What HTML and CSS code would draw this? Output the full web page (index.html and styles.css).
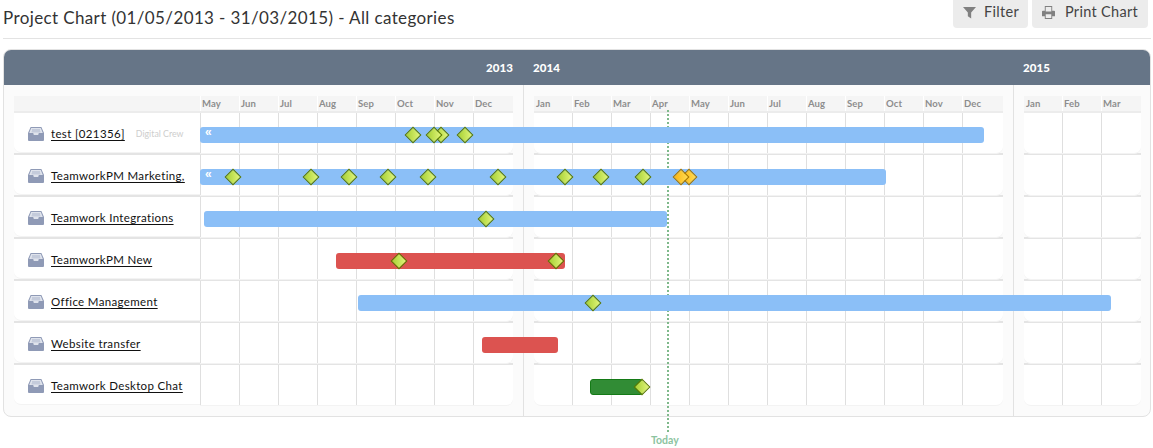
FILE: index.html
```html
<!DOCTYPE html>
<html lang="en">
<head>
<meta charset="utf-8">
<title>Project Chart</title>
<link rel="stylesheet" href="styles.css">
</head>
<body>
<header class="topbar">
  <h1 class="title">Project Chart (01/05/2013 - 31/03/2015) - All categories</h1>
  <div class="actions">
    <button class="btn btn-filter"><svg class="btn-icon" viewBox="0 0 14 14"><path d="M0 1h14L8.8 7v6.5L5.2 11V7z"/></svg>Filter</button>
    <button class="btn btn-print"><svg class="btn-icon" viewBox="0 0 14 14"><path fill-rule="evenodd" d="M3 0h8v5h2a1 1 0 0 1 1 1v5h-3v3H3v-3H0V6a1 1 0 0 1 1-1h2zM4 1v5h6V1zM4 9v4h6V9z"/></svg>Print Chart</button>
  </div>
</header>

<main class="panel">
  <div class="years">
    <div class="year-cell year-a">2013</div>
    <div class="year-cell year-b">2014</div>
    <div class="year-cell year-c">2015</div>
  </div>
  <div class="chart">
    <section class="sheet sheet-a">
      <div class="names">
        <div class="names-head"></div>
        <div class="name-row"><div class="name-cell"><svg class="tray" viewBox="0 0 16 14"><use href="#tray"/></svg><a class="name">test [021356]</a><span class="company">Digital Crew</span></div></div>
        <div class="name-row"><div class="name-cell"><svg class="tray" viewBox="0 0 16 14"><use href="#tray"/></svg><a class="name">TeamworkPM Marketing,</a></div></div>
        <div class="name-row"><div class="name-cell"><svg class="tray" viewBox="0 0 16 14"><use href="#tray"/></svg><a class="name">Teamwork Integrations</a></div></div>
        <div class="name-row"><div class="name-cell"><svg class="tray" viewBox="0 0 16 14"><use href="#tray"/></svg><a class="name">TeamworkPM New</a></div></div>
        <div class="name-row"><div class="name-cell"><svg class="tray" viewBox="0 0 16 14"><use href="#tray"/></svg><a class="name">Office Management</a></div></div>
        <div class="name-row"><div class="name-cell"><svg class="tray" viewBox="0 0 16 14"><use href="#tray"/></svg><a class="name">Website transfer</a></div></div>
        <div class="name-row"><div class="name-cell"><svg class="tray" viewBox="0 0 16 14"><use href="#tray"/></svg><a class="name">Teamwork Desktop Chat</a></div></div>
      </div>
      <div class="months m8">
        <div class="month-head"><span>May</span><span>Jun</span><span>Jul</span><span>Aug</span><span>Sep</span><span>Oct</span><span>Nov</span><span>Dec</span></div>
        <div class="grid-row"></div><div class="grid-row"></div><div class="grid-row"></div><div class="grid-row"></div><div class="grid-row"></div><div class="grid-row"></div><div class="grid-row"></div>
      </div>
    </section>
    <section class="sheet sheet-b">
      <div class="months m12">
        <div class="month-head"><span>Jan</span><span>Feb</span><span>Mar</span><span>Apr</span><span>May</span><span>Jun</span><span>Jul</span><span>Aug</span><span>Sep</span><span>Oct</span><span>Nov</span><span>Dec</span></div>
        <div class="grid-row"></div><div class="grid-row"></div><div class="grid-row"></div><div class="grid-row"></div><div class="grid-row"></div><div class="grid-row"></div><div class="grid-row"></div>
      </div>
    </section>
    <section class="sheet sheet-c">
      <div class="months m3">
        <div class="month-head"><span>Jan</span><span>Feb</span><span>Mar</span></div>
        <div class="grid-row"></div><div class="grid-row"></div><div class="grid-row"></div><div class="grid-row"></div><div class="grid-row"></div><div class="grid-row"></div><div class="grid-row"></div>
      </div>
    </section>
  </div>
</main>

<div class="today"><span class="today-label">Today</span></div>

<div class="bars">
  <div class="lane">
    <div class="bar blue" style="left:200px;width:784px"><span class="more">«</span></div>
    <i class="ms" style="left:413px"></i><i class="ms" style="left:441px"></i><i class="ms" style="left:434px"></i><i class="ms" style="left:465px"></i>
  </div>
  <div class="lane">
    <div class="bar blue" style="left:200px;width:686px"><span class="more">«</span></div>
    <i class="ms" style="left:233px"></i><i class="ms" style="left:311px"></i><i class="ms" style="left:349px"></i><i class="ms" style="left:388px"></i><i class="ms" style="left:428px"></i><i class="ms" style="left:498px"></i><i class="ms" style="left:565px"></i><i class="ms" style="left:601px"></i><i class="ms" style="left:643px"></i><i class="ms late" style="left:689px"></i><i class="ms late" style="left:681px"></i>
  </div>
  <div class="lane">
    <div class="bar blue" style="left:204px;width:463px"></div>
    <i class="ms" style="left:486px"></i>
  </div>
  <div class="lane">
    <div class="bar red" style="left:336px;width:229px"></div>
    <i class="ms" style="left:399px"></i><i class="ms" style="left:556px"></i>
  </div>
  <div class="lane">
    <div class="bar blue" style="left:358px;width:753px"></div>
    <i class="ms" style="left:593px"></i>
  </div>
  <div class="lane">
    <div class="bar red" style="left:482px;width:76px"></div>
  </div>
  <div class="lane">
    <div class="bar green" style="left:590px;width:53px"></div>
    <i class="ms" style="left:642px"></i>
  </div>
</div>

<svg class="defs" width="0" height="0" aria-hidden="true">
  <symbol id="tray" viewBox="0 0 16 14">
    <path fill="#8f9ab6" d="M2.6 0h10.8L16 6v7a1 1 0 0 1-1 1H1a1 1 0 0 1-1-1V6z"/>
    <path fill="#dfe3ec" d="M3.2 1h9.6L14.8 6H10.8L10.2 8H5.8L5.2 6H1.2z"/>
    <path fill="#aab3c9" d="M4 2.6h8v.8H4zM3.6 4.4h8.8v.8H3.6z"/>
  </symbol>
</svg>
</body>
</html>
```
FILE: styles.css
```css
* { box-sizing: border-box; }
html, body { margin: 0; padding: 0; }
body {
  position: relative;
  width: 1153px;
  height: 448px;
  overflow: hidden;
  background: #fff;
  font-family: "Lato", "Liberation Sans", sans-serif;
  color: #333;
}
.topbar {
  display: flex;
  justify-content: space-between;
  align-items: flex-start;
  height: 39px;
  margin: 0 2px 0 3px;
  border-bottom: 1px solid #e3e3e3;
}
.title {
  margin: 8px 0 0;
  font-size: 17px;
  line-height: 20px;
  font-weight: 400;
  letter-spacing: .38px;
  color: #333;
}
.actions { display: flex; gap: 4px; margin-right: 3px; }
.btn {
  display: flex;
  align-items: center;
  height: 28px;
  padding: 0 0 4px 10px;
  border: 0;
  border-radius: 0 0 4px 4px;
  background: #ececec;
  font: 400 14.5px/1 "Lato", sans-serif;
  letter-spacing: .3px;
  color: #444;
  white-space: nowrap;
}
.btn-filter { width: 75px; }
.btn-print { width: 116px; }
.btn-icon { width: 13px; height: 13px; margin-right: 10px; fill: #808080; flex: none; }
.btn-filter .btn-icon { margin-right: 8px; }

.panel {
  margin: 10px 2px 0 3px;
  height: 368px;
  border: 1px solid #e2e2e2;
  border-radius: 8px;
  background: #fbfbfb;
  overflow: hidden;
}
.years {
  display: flex;
  height: 35px;
  background: #667587;
  color: #fff;
  font-size: 11.5px;
  font-weight: 900;
  letter-spacing: .1px;
  line-height: 35px;
}
.year-cell { flex: none; }
.year-a { width: 509px; text-align: right; }
.year-b { width: 490px; padding-left: 20px; }
.year-c { width: 140px; padding-left: 20px; }

.chart { display: flex; height: 331px; }
.sheet { display: flex; flex: none; padding-top: 11px; }
.sheet-a { width: 520px; padding-left: 10px; border-right: 1px solid #e2e2e2; }
.sheet-b { width: 490px; padding-left: 10px; border-right: 1px solid #e2e2e2; }
.sheet-c { flex: 1; padding-left: 10px; }

.names { width: 186px; flex: none; }
.names-head { height: 17px; background: #f5f5f5; border-bottom: 2px solid #ececec; }
.name-row {
  height: 42px;
  background: #fbfbfb;
  border-bottom: 2px solid #e4e4e4;
}
.name-row:last-child { border-bottom-color: transparent; }
.name-cell {
  display: flex;
  align-items: center;
  height: 100%;
  padding-left: 14px;
  background: #fff;
  border-bottom: 1px solid #f3f3f3;
  border-radius: 0 0 0 7px;
}
.tray { width: 16px; height: 14px; flex: none; margin: 3px 7px 0 0; }
.name {
  margin-top: 2px;
  font-size: 11.5px;
  letter-spacing: .35px;
  color: #111;
  text-decoration: underline;
  text-underline-offset: 2px;
  white-space: nowrap;
}
.company {
  margin: 2px 0 0 11px;
  font-size: 8.8px;
  color: #cdcdcd;
  white-space: nowrap;
}

.months { flex: none; }
.m8 { width: 313px; --lines: 312px; }
.m12 { width: 469px; --lines: 466px; }
.m3 { width: 117px; --lines: 115px; }
.month-head {
  display: flex;
  height: 17px;
  background: #f5f5f5;
  border-bottom: 2px solid #ececec;
}
.month-head span {
  width: 39px;
  flex: none;
  padding-left: 1px;
  font-size: 9.5px;
  line-height: 15px;
  font-weight: 700;
  letter-spacing: .1px;
  color: #8d8d8d;
  border-left: 1px solid #fff;
}
.m12 .month-head span:first-child,
.m3 .month-head span:first-child { width: 38px; border-left: 0; padding-left: 2px; }
.grid-row {
  height: 42px;
  border-bottom: 2px solid #e4e4e4;
  background: #fbfbfb;
}
.grid-row:last-child { border-bottom-color: transparent; }
.grid-row::before {
  content: "";
  display: block;
  height: 100%;
  background-color: #fff;
  background-repeat: no-repeat;
  background-size: var(--lines) 100%;
  border-bottom: 1px solid #f3f3f3;
}
.m8 .grid-row::before {
  background-image: repeating-linear-gradient(to right, #dfdfdf 0, #dfdfdf 1px, transparent 1px, transparent 39px);
  border-radius: 0 0 7px 0;
}
.m12 .grid-row::before,
.m3 .grid-row::before {
  background-image: repeating-linear-gradient(to right, transparent 0, transparent 38px, #dfdfdf 38px, #dfdfdf 39px);
  border-radius: 0 0 7px 7px;
}

.today {
  position: absolute;
  left: 667px;
  top: 110px;
  height: 323px;
  width: 2px;
  background: repeating-linear-gradient(to bottom, #7fb98b 0, #7fb98b 2px, transparent 2px, transparent 4px);
}
.today-label {
  position: absolute;
  left: -16px;
  top: 324px;
  font-size: 10.5px;
  font-weight: 700;
  color: #8cc4a0;
}

.bars { position: absolute; left: 0; top: 113px; width: 1153px; }
.lane { position: relative; height: 42px; }
.bar {
  position: absolute;
  top: 14px;
  height: 16px;
  border-radius: 3px;
  color: #fff;
}
.blue { background: #8bbff7; }
.red { background: #dc5350; }
.green { background: #318c35; border: 1px solid #147a16; }
.more {
  position: absolute;
  left: 5px;
  top: 1px;
  font-family: "Liberation Sans", sans-serif;
  font-size: 12px;
  line-height: 8px;
  font-weight: 700;
}
.ms {
  position: absolute;
  top: 16px;
  width: 12px;
  height: 12px;
  margin-left: -6px;
  transform: rotate(45deg);
  background: linear-gradient(to top right, #a6d033, #e1f57a);
  border: 1px solid #5a7800;
}
.ms.late {
  background: linear-gradient(to top right, #fbb40f, #ffdc55);
  border-color: #a37400;
}
.defs { position: absolute; }
```
